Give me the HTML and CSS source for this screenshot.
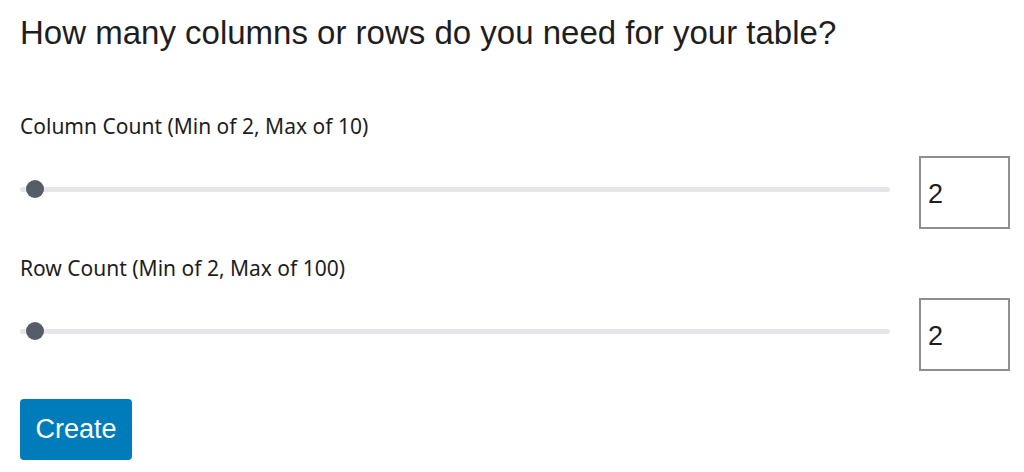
FILE: index.html
```html
<!DOCTYPE html>
<html>
<head>
<meta charset="utf-8">
<link rel="stylesheet" href="styles.css">
</head>
<body>
<div class="page">
  <h1 class="title">How many columns or rows do you need for your table?</h1>
  <div class="field field-first">
    <label class="label">Column Count (Min of 2, Max of 10)</label>
    <div class="control">
      <input class="range" type="range" min="2" max="10" value="2">
      <input class="num" type="number" min="2" max="10" value="2">
    </div>
  </div>
  <div class="field field-next">
    <label class="label">Row Count (Min of 2, Max of 100)</label>
    <div class="control">
      <input class="range" type="range" min="2" max="100" value="2">
      <input class="num" type="number" min="2" max="100" value="2">
    </div>
  </div>
  <button class="btn">Create</button>
</div>
</body>
</html>
```
FILE: styles.css
```css
html, body {
  margin: 0;
  padding: 0;
  background: #ffffff;
}
.page {
  padding: 14px 14px 0 20px;
  display: flex;
  flex-direction: column;
  align-items: flex-start;
}
.title {
  margin: 0;
  font-family: "Liberation Sans", Arial, sans-serif;
  font-weight: 400;
  font-size: 33px;
  line-height: 37px;
  color: #1e1e1e;
}
.field {
  align-self: stretch;
  display: flex;
  flex-direction: column;
}
.field-first {
  margin-top: 62px;
}
.field-next {
  margin-top: 26px;
}
.label {
  font-family: "Noto Sans", "Open Sans", sans-serif;
  font-size: 21px;
  line-height: 26px;
  color: #1e1e1e;
}
.control {
  display: flex;
  align-items: center;
  gap: 29px;
  margin-top: 17px;
}
.range {
  -webkit-appearance: none;
  appearance: none;
  flex: 1;
  margin: 0 0 7px 0;
  height: 20px;
  background: transparent;
}
.range::-webkit-slider-runnable-track {
  height: 5px;
  background: #e6e6ea;
  border-radius: 3px;
}
.range::-webkit-slider-thumb {
  -webkit-appearance: none;
  appearance: none;
  width: 18px;
  height: 18px;
  margin-top: -6.5px;
  margin-left: 6px;
  border-radius: 50%;
  background: #555d66;
  border: none;
}
.num {
  -moz-appearance: textfield;
  box-sizing: border-box;
  width: 91px;
  height: 73px;
  margin: 0;
  padding: 4px 0 0 7px;
  border: 2px solid #8c8f94;
  border-radius: 0;
  font-family: "Liberation Sans", Arial, sans-serif;
  font-size: 27px;
  color: #1e1e1e;
  background: #fff;
}
.num::-webkit-inner-spin-button,
.num::-webkit-outer-spin-button {
  -webkit-appearance: none;
  margin: 0;
}
.btn {
  margin-top: 28px;
  width: 112px;
  height: 61px;
  border: none;
  border-radius: 4px;
  background: #007cba;
  color: #ffffff;
  font-family: "Liberation Sans", Arial, sans-serif;
  font-size: 27px;
  padding: 0;
}
```
